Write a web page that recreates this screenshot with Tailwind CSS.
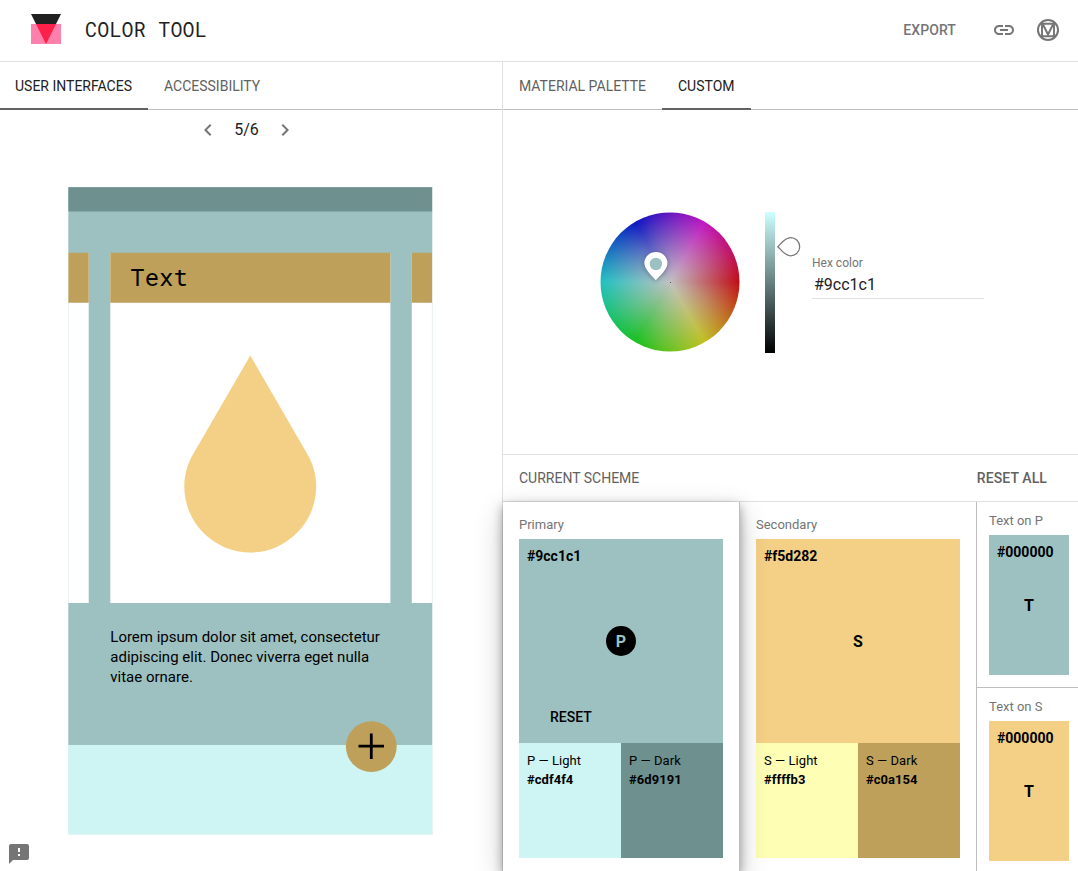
<!DOCTYPE html>
<html lang="en">
<head>
<meta charset="utf-8">
<title>Color Tool</title>
<script src="https://cdn.jsdelivr.net/npm/@tailwindcss/browser@4"></script>
</head>
<body class="flex h-[871px] w-[1078px] flex-col overflow-hidden bg-white font-['Roboto',sans-serif] text-sm text-[#212121]">
<header class="flex h-[62px] shrink-0 items-center border-b border-[#e0e0e0] pr-[18px] pb-0.5 pl-[31px]">
  <svg class="-mt-0.5 h-[30px] w-[30px]" viewBox="0 0 30 30"><path d="M0 0h30l-5 10H5z" fill="#212121"/><path d="M0 10h30v20H0z" fill="#ff80ab"/><path d="M5 10h20L15 30z" fill="#ff1f4b"/></svg>
  <h1 class="ml-6 whitespace-pre pb-0.5 font-['Roboto_Mono','Liberation_Mono',monospace] text-[20px] leading-6 tracking-[0.2px]">COLOR TOOL</h1>
  <button class="ml-auto text-sm font-medium tracking-[0.1px] text-[#757575]">EXPORT</button>
  <svg class="ml-9 h-6 w-6" viewBox="0 0 24 24" fill="#757575"><path d="M3.900 12c0-1.710 1.390-3.100 3.100-3.100h4V7H7c-2.760 0-5 2.240-5 5s2.240 5 5 5h4v-1.900H7c-1.710 0-3.100-1.390-3.100-3.100zM8 13h8v-2H8v2zm9-6h-4v1.900h4c1.710 0 3.100 1.390 3.100 3.100s-1.390 3.100-3.100 3.100h-4V17h4c2.760 0 5-2.240 5-5s-2.240-5-5-5z"/></svg>
  <svg class="ml-5 h-6 w-6" viewBox="0 0 24 24" fill="none" stroke="#757575" stroke-width="2"><circle cx="12" cy="12" r="10"/><path d="M6 5.800h12v12.400H6z" stroke-width="1.900"/><path d="M7 6.500L12 16.500l5-10" stroke-width="2"/></svg>
</header>
<main class="flex min-h-0 flex-1">
  <section class="flex w-[503px] shrink-0 flex-col border-r border-[#e0e0e0]">
    <nav class="flex h-12 shrink-0 border-b border-[#bdbdbd] text-[#616161]">
      <a class="-mb-px flex w-[148px] items-center border-b-2 border-[#616161] pt-0.5 pl-[15px] text-[#212121]">USER INTERFACES</a>
      <a class="flex items-center pl-4">ACCESSIBILITY</a>
    </nav>
    <div class="flex h-10 items-center justify-center gap-[14px] pr-[9px] text-base">
      <svg class="h-6 w-6" viewBox="0 0 24 24" fill="#757575"><path d="M15.410 7.410L14 6l-6 6 6 6 1.410-1.410L10.830 12z"/></svg>
      <span class="w-[25px] text-center">5/6</span>
      <svg class="h-6 w-6" viewBox="0 0 24 24" fill="#757575"><path d="M10 6L8.590 7.410 13.170 12l-4.580 4.590L10 18l6-6z"/></svg>
    </div>
    <svg class="mt-[37px] ml-[68px] h-[648px] w-[365px]" viewBox="68 187 365 648">
      <path d="M68.400 187.300h363.900V834.300H68.400z" fill="#fff" stroke="#e0eaea" stroke-width=".7"/>
      <path d="M68.400 187.300h363.700V253H68.400zM68.400 603h363.700v142H68.400z" fill="#9dc0c0"/>
      <path d="M68.400 187.300h363.700v24.200H68.400z" fill="#6e9190"/>
      <path d="M88.700 252.500h21.600v351H88.700zM390.400 252.500h21.400v351h-21.400z" fill="#9dc0c0"/>
      <path d="M68.400 252.800h20.300v50H68.400zM110.300 252.800h280.100v50H110.300zM411.800 252.800h20.300v50h-20.300z" fill="#bea05a"/>
      <path d="M68.400 745.100h363.700v89.200H68.400z" fill="#cef4f3"/>
      <path d="M250.300 355.500L307 453.500C313 463.500 316.200 474.500 316.200 486.500a65.950 65.950 0 0 1-131.900 0C184.300 474.500 187.500 463.500 193.500 453.500z" fill="#f4d086"/>
      <circle cx="371.300" cy="746.600" r="25.400" fill="#bea05a"/>
      <path d="M371.300 733.500v25.500M358.500 746.100H384" stroke="#000" stroke-width="2.800"/>
      <text x="130.300" y="286.300" font-size="24" class="font-['Roboto_Mono','Liberation_Mono',monospace]">Text</text>
      <g font-size="15" fill="#000">
        <text x="110.300" y="642">Lorem ipsum dolor sit amet, consectetur</text>
        <text x="110.300" y="662">adipiscing elit. Donec viverra eget nulla</text>
        <text x="110.300" y="682">vitae ornare.</text>
      </g>
    </svg>
  </section>
  <section class="flex min-w-0 flex-1 flex-col">
    <nav class="flex h-12 shrink-0 border-b border-[#bdbdbd] text-[#616161]">
      <a class="flex w-[159px] items-center pl-4">MATERIAL PALETTE</a>
      <a class="-mb-px flex w-[89px] items-center border-b-2 border-[#616161] pt-0.5 pl-4 text-[#212121]">CUSTOM</a>
    </nav>
    <div class="flex h-[344px] shrink-0 pt-[102px] pl-[97px]">
      <div class="relative h-[140px] w-[140px]">
        <div class="h-[140px] w-[140px] bg-[radial-gradient(circle_closest-side,#c1c1c1_0%,rgba(193,193,193,0)_100%),conic-gradient(from_90deg,#c10a14,#c1c121_60deg,#14c11e_120deg,#1ec1c1_180deg,#0a14c1_240deg,#c114c1_300deg,#c10a14)] [clip-path:circle(69.500px)]"></div>
        <i class="absolute top-[70px] left-[70px] h-px w-px bg-[#555]"></i>
        <svg class="absolute top-[35px] left-[40px] overflow-visible" width="32" height="38" viewBox="0 0 32 38"><path d="M15.800 33.300C14.500 31 4.300 23 4.300 16.200a11.600 11.300 0 0 1 23.200 0C27.500 23 17.300 31 15.800 33.300z" fill="#fff" class="drop-shadow-[0_1px_2px_rgba(0,0,0,0.300)]"/><circle cx="15.900" cy="17" r="6.200" fill="#9dc0c0"/></svg>
      </div>
      <div class="ml-[25px] h-[141px] w-2.5 bg-[linear-gradient(to_bottom,#cdffff,#000)]"></div>
      <svg class="mt-[23.500px] ml-[2px] h-[22px] w-6" viewBox="0 0 24 22" fill="#fff" stroke="#757575" stroke-width="1.200"><path d="M.800 10.700C4 8 7.500 1.600 13.600 1.600a9 9 0 0 1 0 18.200C7.500 19.800 4 13.400.800 10.700z"/></svg>
      <label class="mt-11 ml-[11px] flex w-[172px] flex-col">
        <span class="h-[14px] text-xs leading-[14px] text-[#757575]">Hex color</span>
        <span class="h-[29px] border-b border-[#e0e0e0] pl-0.5 text-base leading-[30px]">#9cc1c1</span>
      </label>
    </div>
    <div class="flex h-12 shrink-0 items-center justify-between border-y border-[#e0e0e0] pr-[31px] pl-4 text-[#616161]">
      <span>CURRENT SCHEME</span><button class="font-medium tracking-[0.1px]">RESET ALL</button>
    </div>
    <div class="flex flex-1 text-black">
      <div class="relative z-10 w-[237px] border-r border-[#bdbdbd] bg-white px-4 shadow-[0_10px_28px_rgba(0,0,0,0.200),0_4px_10px_rgba(0,0,0,0.350)]">
        <div class="h-[37px] pt-[15px] text-[13px] leading-4 text-[#757575]">Primary</div>
        <div class="relative flex h-[204px] items-center justify-center bg-[#9dc0c0]">
          <b class="absolute top-2 left-2 leading-[18px] font-bold">#9cc1c1</b>
          <b class="flex h-[30px] w-[30px] items-center justify-center rounded-full bg-black pt-0.5 text-base font-bold text-[#9dc0c0]">P</b>
          <button class="absolute bottom-4 left-[31px] leading-5 font-medium">RESET</button>
        </div>
        <div class="flex h-[115px] text-[13px] leading-[19px] tracking-[0.050px]">
          <div class="flex-1 bg-[#cef4f3] pt-2 pl-2">P — Light<br><b>#cdf4f4</b></div>
          <div class="flex-1 bg-[#6e9190] pt-2 pl-2">P — Dark<br><b>#6d9191</b></div>
        </div>
      </div>
      <div class="w-[237px] border-r border-[#bdbdbd] px-4">
        <div class="h-[37px] pt-[15px] text-[13px] leading-4 text-[#757575]">Secondary</div>
        <div class="relative flex h-[204px] items-center justify-center bg-[#f4d086]">
          <b class="absolute top-2 left-2 leading-[18px] font-bold">#f5d282</b>
          <b class="pt-0.5 text-base">S</b>
        </div>
        <div class="flex h-[115px] text-[13px] leading-[19px] tracking-[0.050px]">
          <div class="flex-1 bg-[#fefeb5] pt-2 pl-2">S — Light<br><b>#ffffb3</b></div>
          <div class="flex-1 bg-[#bea05a] pt-2 pl-2">S — Dark<br><b>#c0a154</b></div>
        </div>
      </div>
      <div class="flex flex-1 flex-col">
        <div class="h-[186px] border-b border-[#bdbdbd] pl-3">
          <div class="h-[33px] pt-[11px] text-[13px] leading-4 text-[#757575]">Text on P</div>
          <div class="relative flex h-[140px] w-20 items-center justify-center bg-[#9dc0c0]">
            <b class="absolute top-2 left-2 leading-[18px]">#000000</b><b class="pt-0.5 text-base">T</b>
          </div>
        </div>
        <div class="pl-3">
          <div class="h-[33px] pt-[11px] text-[13px] leading-4 text-[#757575]">Text on S</div>
          <div class="relative flex h-[140px] w-20 items-center justify-center bg-[#f4d086]">
            <b class="absolute top-2 left-2 leading-[18px]">#000000</b><b class="pt-0.5 text-base">T</b>
          </div>
        </div>
      </div>
    </div>
  </section>
</main>
<svg class="fixed top-[842px] left-[7px] h-6 w-6" viewBox="0 0 24 24" fill="#757575"><path d="M20 2H4c-1.100 0-1.990.900-1.990 2L2 22l4-4h14c1.100 0 2-.900 2-2V4c0-1.100-.900-2-2-2zm-7 12h-2v-2h2v2zm0-4h-2V6h2v4z"/></svg>
</body>
</html>
